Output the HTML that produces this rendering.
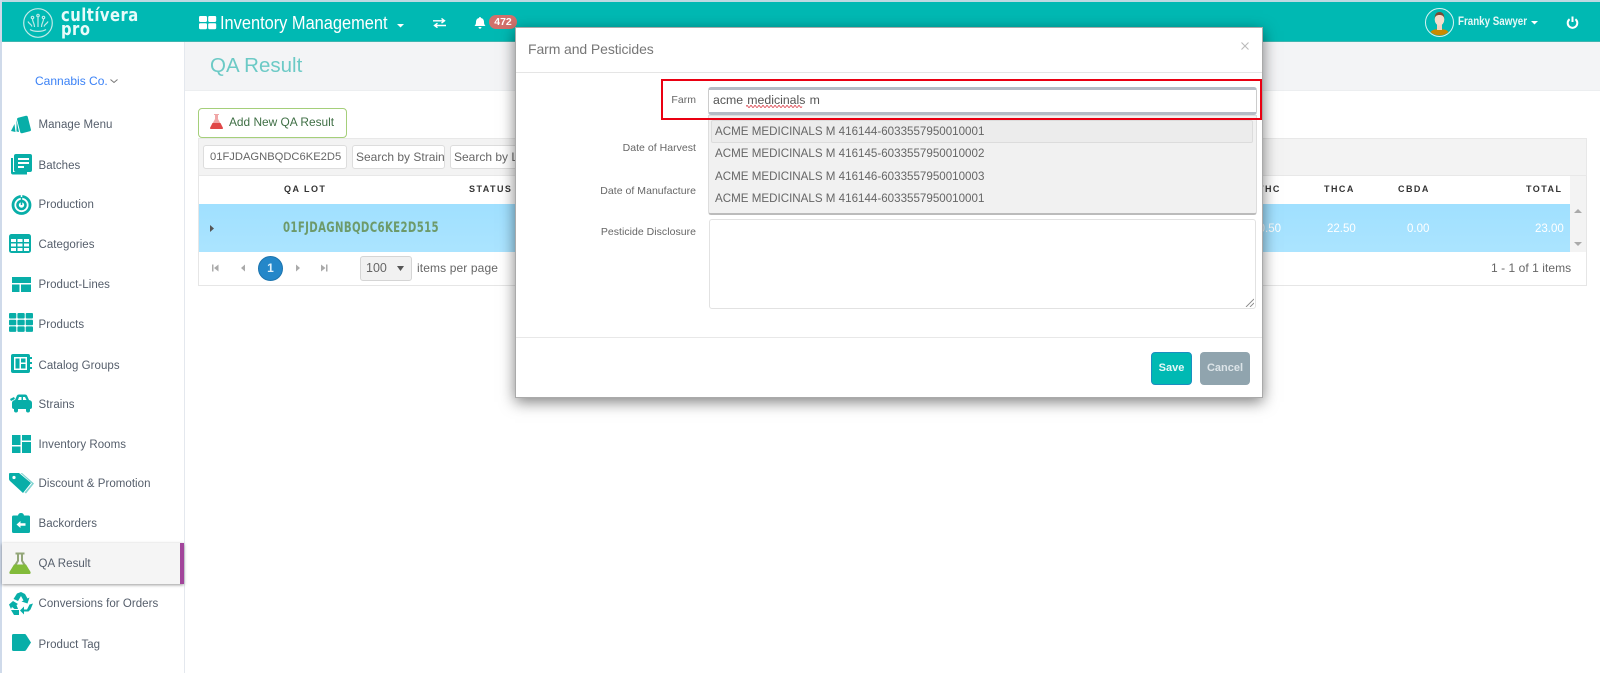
<!DOCTYPE html>
<html><head><meta charset="utf-8"><title>QA Result</title>
<style>
html,body{margin:0;padding:0;width:1600px;height:673px;overflow:hidden;background:#fff;font-family:"Liberation Sans",sans-serif}
div,span,svg{position:absolute;box-sizing:border-box}
.t{white-space:nowrap;height:20px;line-height:20px}
.m{left:38.500px;font-size:11.500px;letter-spacing:.04px;color:#555e6b;margin-top:1px}
.h{font-size:9px;font-weight:bold;letter-spacing:1.450px;color:#333;top:179px}
.v{font-size:11.500px;color:#fff;top:219px}
.l{font-size:10.500px;color:#666;text-align:right;right:904px;letter-spacing:.03px}
.o{left:715px;font-size:11.600px;color:#666;margin-top:1px}
.inp{background:#fff;border:1px solid #ddd;border-radius:3px;font-size:12px;color:#666;overflow:hidden;white-space:nowrap;padding-left:3px}
.logo{font-family:'DejaVu Sans',sans-serif;font-size:18px;font-weight:bold;color:#e8fbfa;letter-spacing:.6px;transform:scaleX(.82);transform-origin:left}
</style></head><body>
<div style="left:0;top:0;width:1600px;height:2px;background:#bcd9e2"></div>
<div style="left:0;top:0;width:2px;height:673px;background:#cfdaea"></div>
<div style="left:2px;top:2px;width:1598px;height:40px;background:#00b9b3;border-bottom:1px solid #3fb5b0"></div>

<svg style="left:22px;top:7px" width="32" height="32" viewBox="0 0 32 32" fill="none" stroke="#bfeae8" stroke-width="1.200"><circle cx="16" cy="16" r="14.300"/><path d="M8 22.500c4 2.500 12 2.500 16 0M16 20V10M12.500 20c0-4-2-5-2-8M19.500 20c0-4 2-5 2-8M10 19.500c-1-3-3-2.500-4-5M22 19.500c1-3 3-2.500 4-5"/><circle cx="16" cy="8.500" r="1.200"/><circle cx="10.500" cy="10.500" r="1.200"/><circle cx="21.500" cy="10.500" r="1.200"/></svg>
<div class="t logo" style="left:61px;top:6px">cultívera</div>
<div class="t logo" style="left:61px;top:20px">pro</div>

<svg style="left:199px;top:16px" width="18" height="14" fill="#fff"><rect width="8" height="6" rx="1.200"/><rect x="9.200" width="8" height="6" rx="1.200"/><rect y="7.200" width="8" height="6" rx="1.200"/><rect x="9.200" y="7.200" width="8" height="6" rx="1.200"/></svg>
<div class="t" style="left:220px;top:13px;font-size:18px;color:#fff;transform:scaleX(.91);transform-origin:left">Inventory Management</div>
<svg style="left:397px;top:24px" width="7" height="4" fill="#fff"><path d="M0 0h7L3.500 3.500z"/></svg>
<svg style="left:433px;top:18px" width="13" height="10" fill="none" stroke="#fff" stroke-width="1.400"><path d="M0 2.800h11M8.500 .5l3 2.300-3 2.200M13 7.500H2M4.500 5.200l-3 2.300 3 2.200"/></svg>
<svg style="left:474px;top:17px" width="12" height="12" fill="#fff"><path d="M6 0c.7 0 1 .4 1 1 2 .4 3 2 3 4 0 2 .6 3 1.500 4H.5C1.400 8 2 7 2 5c0-2 1-3.600 3-4 0-.6.3-1 1-1zM4.500 10h3c0 1-.7 1.700-1.500 1.700S4.500 11 4.500 10z"/></svg>
<div style="left:489px;top:15px;width:28px;height:14px;background:#d2706b;border-radius:7px;color:#fff;font-size:10.500px;font-weight:bold;text-align:center;line-height:14px">472</div>

<svg style="left:1425px;top:8px" width="29" height="29" viewBox="0 0 29 29"><defs><clipPath id="c"><circle cx="14.500" cy="14.500" r="13"/></clipPath></defs><circle cx="14.500" cy="14.500" r="14" fill="#00b9b3" stroke="#d6f3f2" stroke-width="1"/><g clip-path="url(#c)"><path d="M4 29c0-6 4-8 10.500-8s10.500 2 10.500 8z" fill="#c98a00"/><rect x="12" y="16" width="5" height="6" fill="#f2d4c0"/><ellipse cx="14.500" cy="11.500" rx="4.800" ry="6" fill="#f5dccb"/><path d="M9.700 10c0-4 2-6 4.800-6s4.800 2 4.800 6c-1-2-2-3-4.800-3s-3.800 1-4.800 3z" fill="#7b4a32"/></g></svg>
<div class="t" style="left:1458px;top:12px;font-size:11.500px;font-weight:bold;color:#e6f8f7;transform:scaleX(.85);transform-origin:left">Franky Sawyer</div>
<svg style="left:1531px;top:21px" width="7" height="4" fill="#fff"><path d="M0 0h7L3.500 3.500z"/></svg>
<svg style="left:1566px;top:16px" width="13" height="13" fill="none" stroke="#fff" stroke-width="2"><path d="M3.600 3.200a4.800 4.800 0 1 0 5.800 0M6.500 .5V6"/></svg>

<!-- sidebar -->
<div style="left:184px;top:42px;width:1px;height:631px;background:#e4e8ee"></div>
<div class="t" style="left:35px;top:71px;font-size:12px;color:#3b82f6">Cannabis Co.</div>
<svg style="left:110px;top:79px" width="8" height="5" fill="none" stroke="#777" stroke-width="1"><path d="M.5.500l3.500 3 3.500-3"/></svg>

<svg style="left:10px;top:115px" width="22" height="20" fill="#08aea8"><rect x="8.500" y="1.500" width="11" height="16" rx="1.500" transform="rotate(-14 14 9.500)"/><path d="M6.500 5l2.500 12-2.500-.5zM1 16l3.500-7 1 8z"/></svg>
<div class="t m" style="top:114px">Manage Menu</div>
<svg style="left:11px;top:154px" width="21" height="21" fill="#08aea8"><path d="M0 4h2v14h14v2.500H2q-2 0-2-2z"/><path d="M5 0h14q2 0 2 2v14q0 2-2 2H5q-2 0-2-2V2q0-2 2-2z"/><path d="M7 4h11v2H7zM7 8h11v2H7zM7 12h6v2H7z" fill="#fff"/></svg>
<div class="t m" style="top:155px">Batches</div>
<svg style="left:11px;top:195px" width="21" height="20" fill="none" stroke="#08aea8"><circle cx="10.500" cy="10" r="8.500" stroke-width="2.800"/><circle cx="10.500" cy="10" r="4" stroke-width="2.600"/><path d="M10.500 0v4" stroke="#fff" stroke-width="1.500"/><path d="M10.500 2v8" stroke-width="1.500"/></svg>
<div class="t m" style="top:194px">Production</div>
<svg style="left:9px;top:234px" width="22" height="19"><rect width="22" height="19" rx="2.500" fill="#08aea8"/><g fill="#fff"><rect x="2" y="5" width="5" height="3"/><rect x="8.500" y="5" width="5" height="3"/><rect x="15" y="5" width="5" height="3"/><rect x="2" y="9.500" width="5" height="3"/><rect x="8.500" y="9.500" width="5" height="3"/><rect x="15" y="9.500" width="5" height="3"/><rect x="2" y="14" width="5" height="3"/><rect x="8.500" y="14" width="5" height="3"/><rect x="15" y="14" width="5" height="3"/></g></svg>
<div class="t m" style="top:234px">Categories</div>
<svg style="left:12px;top:277px" width="19" height="15" fill="#08aea8"><rect width="19" height="6"/><rect y="7.500" width="7.500" height="7.500"/><rect x="9" y="7.500" width="10" height="7.500"/></svg>
<div class="t m" style="top:274px">Product-Lines</div>
<svg style="left:9px;top:313px" width="24" height="19" fill="#08aea8"><rect width="7.300" height="5.500" rx="1"/><rect x="8.400" width="7.300" height="5.500" rx="1"/><rect x="16.700" width="7.300" height="5.500" rx="1"/><rect y="6.700" width="7.300" height="5.500" rx="1"/><rect x="8.400" y="6.700" width="7.300" height="5.500" rx="1"/><rect x="16.700" y="6.700" width="7.300" height="5.500" rx="1"/><rect y="13.400" width="7.300" height="5.500" rx="1"/><rect x="8.400" y="13.400" width="7.300" height="5.500" rx="1"/><rect x="16.700" y="13.400" width="7.300" height="5.500" rx="1"/></svg>
<div class="t m" style="top:314px">Products</div>
<svg style="left:11px;top:354px" width="21" height="19"><rect width="19" height="19" rx="2" fill="#08aea8"/><rect x="19" y="3" width="2" height="2" fill="#08aea8"/><rect x="19" y="8" width="2" height="2" fill="#08aea8"/><rect x="19" y="13" width="2" height="2" fill="#08aea8"/><rect x="3" y="3" width="13" height="13" fill="#fff"/><g fill="#08aea8"><rect x="4.500" y="4.500" width="4" height="10"/><rect x="10" y="4.500" width="4.500" height="4"/><rect x="10" y="10" width="4.500" height="4.500"/></g></svg>
<div class="t m" style="top:355px">Catalog Groups</div>
<svg style="left:10px;top:394px" width="22" height="19" fill="#08aea8"><path d="M5 6l2-4.500q.5-1 2-1h6q1.500 0 2 1L19 6q3 .5 3 3v4q0 2-2 2v1.500q0 2-2 2t-2-2V15H8v1.500q0 2-2 2t-2-2V15q-2 0-2-2V9q0-2.500 3-3z"/><path d="M8 6l1-3h2.500v3zM13 3h2l1.500 3H13z" fill="#fff"/><path d="M0 5l4-2 1 2-4 2z"/></svg>
<div class="t m" style="top:394px">Strains</div>
<svg style="left:12px;top:435px" width="19" height="18" fill="#08aea8"><rect width="8.500" height="10"/><rect x="10" width="9" height="5.500"/><rect x="10" y="7" width="9" height="11"/><rect y="11.500" width="8.500" height="6.500"/></svg>
<div class="t m" style="top:434px">Inventory Rooms</div>
<svg style="left:9px;top:473px" width="26" height="21" fill="#08aea8"><path d="M1 0h9l12 10-8 10L1 8q-1-1-1-2V1q0-1 1-1z"/><path d="M13 0l12 10.500-8 10-1.500-1L23 10.500 11.500 0z" fill="#7fd4d1"/><circle cx="5" cy="4.500" r="1.600" fill="#fff"/></svg>
<div class="t m" style="top:473px">Discount &amp; Promotion</div>
<svg style="left:12px;top:513px" width="18" height="20"><path d="M1.500 2.500H6q.5-2.500 3-2.500t3 2.500h4.500q1.500 0 1.500 1.500v14.500q0 1.500-1.500 1.500h-15Q0 20 0 18.500V4q0-1.500 1.500-1.500z" fill="#08aea8"/><path d="M4.500 11.500l4-3.500v2.200h5v2.600h-5V15z" fill="#fff"/></svg>
<div class="t m" style="top:513px">Backorders</div>

<div style="left:2px;top:543px;width:182px;height:41px;background:#f5f5f5;box-shadow:0 1px 3px rgba(0,0,0,.4)"></div>
<div style="left:180px;top:543px;width:4px;height:41px;background:#a2459b"></div>
<svg style="left:9px;top:552px" width="22" height="22"><path d="M6.500 .5h9v2H14v6l7.500 11.500q.5 2-1.500 2H2q-2 0-1.500-2L8 8.500v-6H6.500z" fill="#93a678"/><path d="M10 2.500h2v6.500l2.300 4H7.700l2.300-4z" fill="#f5f5f5"/><path d="M5 12.500h12l4.500 7.500q.5 2-1.500 2H2q-2 0-1.500-2z" fill="#82bb3a"/></svg>
<div class="t m" style="top:553px">QA Result</div>

<svg style="left:9px;top:592px" width="24" height="23" fill="#08aea8"><path d="M8 1.500L12 0l4 2 2.500 4.500 2-1-2 6-6-2 2-1L12 4 9 9 4.500 7z"/><path d="M4 9l5 3-1.500 1L9 17H5.500L3 15l-1 2L0 12.500z"/><path d="M24 13l-2.500 6-2 2H15v3l-4-4 4-4v3h3l2.500-5z" transform="translate(0,-1.500)"/><path d="M2 18h8v5H5z"/></svg>
<div class="t m" style="top:593px">Conversions for Orders</div>
<svg style="left:12px;top:634px" width="19" height="17" fill="#08aea8"><path d="M1.500 0h11q1 0 1.500.7l5 7.800-5 7.800q-.5.700-1.500.700h-11Q0 17 0 15.500v-14Q0 0 1.500 0z"/></svg>
<div class="t m" style="top:634px">Product Tag</div>

<!-- content -->
<div style="left:185px;top:42px;width:1415px;height:49px;background:#f3f4f6;border-bottom:1px solid #eceef0"></div>
<div class="t" style="left:210px;top:56px;font-size:20.500px;color:#6ccac6">QA Result</div>

<div style="left:198px;top:108px;width:149px;height:30px;border:1px solid #a5cf7a;border-radius:4px;background:#fff"></div>
<svg style="left:210px;top:114px" width="13" height="15"><path d="M4 0h5v1H8v4l5 9q0 1-1 1H1q-1 0-1-1l5-9V1H4z" fill="#f0a7a7"/><path d="M2.500 9h8l2.500 5q0 1-1 1H1q-1 0-1-1z" fill="#e04848"/></svg>
<div class="t" style="left:229px;top:112px;font-size:11.900px;color:#3f6f45">Add New QA Result</div>

<div style="left:198px;top:138px;width:1389px;height:148px;border:1px solid #e6e6e6"></div>
<div style="left:198px;top:138px;width:1389px;height:38px;background:#f3f3f3;border:1px solid #e8e8e8"></div>
<div class="inp" style="left:203px;top:145px;width:144px;height:24px;line-height:22px;padding-left:6px;font-size:11.200px">01FJDAGNBQDC6KE2D5</div>
<div class="inp" style="left:352px;top:145px;width:93px;height:24px;line-height:22px;font-size:12px">Search by Strain</div>
<div class="inp" style="left:450px;top:145px;width:90px;height:24px;line-height:22px;font-size:12px">Search by Lab</div>
<div class="t h" style="left:284px">QA LOT</div>
<div class="t h" style="left:469px">STATUS</div>
<div class="t h" style="left:1258px">THC</div>
<div class="t h" style="left:1324px">THCA</div>
<div class="t h" style="left:1398px">CBDA</div>
<div class="t h" style="left:1526px">TOTAL</div>

<div style="left:199px;top:204px;width:1371px;height:48px;background:linear-gradient(#a0e0ff,#abe4ff)"></div>
<div style="left:1570px;top:176px;width:16px;height:76px;background:#f3f3f3"></div>
<svg style="left:1574px;top:209px" width="8" height="38" fill="#aaa"><path d="M0 4l4-4 4 4zM0 33h8l-4 4z"/></svg>
<svg style="left:210px;top:225px" width="4" height="7" fill="#555"><path d="M0 0l4 3.500L0 7z"/></svg>
<div class="t" style="left:283px;top:218px;font-family:'DejaVu Sans',sans-serif;font-size:14px;font-weight:bold;color:#6d9a6a;letter-spacing:.5px;transform:scaleX(.725);transform-origin:left">01FJDAGNBQDC6KE2D515</div>
<div class="t v" style="left:1263px;width:18px;overflow:hidden;direction:rtl">0.50</div>
<div class="t v" style="left:1327px">22.50</div>
<div class="t v" style="left:1407px">0.00</div>
<div class="t v" style="left:1535px">23.00</div>

<svg style="left:212px;top:264px" width="122" height="8" fill="#aaa"><path d="M0 .5h1.500v7H0zM2 4l4.500-3.500v7zM29 4l4-3.500v7zM84 .5l4 3.500-4 3.500zM109 .5l4.500 3.500-4.500 3.500zM114 .5h1.500v7H114z"/></svg>
<div style="left:258px;top:256px;width:25px;height:25px;border-radius:50%;background:#2487c9;border:1px solid #1d74ae;color:#dff1fb;font-size:12px;font-weight:bold;text-align:center;line-height:23px">1</div>
<div style="left:360px;top:256px;width:52px;height:25px;background:#f1f1f1;border:1px solid #d5d5d5;border-radius:3px;font-size:12.500px;color:#666;line-height:23px;padding-left:5px">100</div>
<svg style="left:397px;top:266px" width="7" height="5" fill="#555"><path d="M0 0h7L3.500 5z"/></svg>
<div class="t" style="left:417px;top:258px;font-size:12px;color:#666;letter-spacing:.12px">items per page</div>
<div class="t" style="left:1491px;top:258px;font-size:12px;color:#666;letter-spacing:.05px">1 - 1 of 1 items</div>

<!-- modal -->
<div style="left:515px;top:27px;width:748px;height:371px;background:#fff;border:1px solid #aaa;box-shadow:0 4px 14px rgba(0,0,0,.5)"></div>
<div class="t" style="left:528px;top:39px;font-size:14px;color:#777;letter-spacing:-.1px">Farm and Pesticides</div>
<svg style="left:1241px;top:42px" width="8" height="8" stroke="#bbb" stroke-width="1.100"><path d="M.5.500l7 7M7.500.500l-7 7"/></svg>
<div style="left:516px;top:72px;width:746px;height:1px;background:#e5e5e5"></div>

<div style="left:708px;top:87px;width:549px;height:28px;background:#fff;border:1px solid #ccc;border-top:3px solid #b5bbc5;border-bottom:3px solid #b5bbc5;border-radius:3px"></div>
<div class="t" style="left:713px;top:90px;font-size:12.300px;color:#555;word-spacing:.8px">acme medicinals m</div>
<svg style="left:746px;top:105px" width="58" height="3" fill="none" stroke="#e0555f" stroke-width=".9"><path d="M0 1.500q1-2 2 0t2 0 2 0 2 0 2 0 2 0 2 0 2 0 2 0 2 0 2 0 2 0 2 0 2 0 2 0 2 0 2 0 2 0 2 0 2 0 2 0 2 0 2 0 2 0 2 0 2 0 2 0 2 0"/></svg>
<div style="left:708px;top:115px;width:549px;height:100px;background:#f1f1f1;border:1px solid #ddd;border-bottom:2px solid #bbb;border-radius:0 0 3px 3px"></div>
<div style="left:711px;top:120px;width:542px;height:23px;background:#ececec;border:1px solid #dcdcdc;border-radius:2px"></div>
<div class="t o" style="top:121px">ACME MEDICINALS M 416144-6033557950010001</div>
<div class="t o" style="top:143px">ACME MEDICINALS M 416145-6033557950010002</div>
<div class="t o" style="top:166px">ACME MEDICINALS M 416146-6033557950010003</div>
<div class="t o" style="top:188px">ACME MEDICINALS M 416144-6033557950010001</div>

<div class="t l" style="top:90px">Farm</div>
<div class="t l" style="top:138px">Date of Harvest</div>
<div class="t l" style="top:181px">Date of Manufacture</div>
<div class="t l" style="top:222px">Pesticide Disclosure</div>

<div style="left:661px;top:79px;width:601px;height:41px;border:2px solid #ea0012"></div>

<div style="left:709px;top:219px;width:547px;height:90px;background:#fff;border:1px solid #e2e2e2;border-radius:3px"></div>
<svg style="left:1245px;top:298px" width="9" height="9" stroke="#888" stroke-width=".9"><path d="M1 9l8-8M5 9l4-4"/></svg>
<div style="left:516px;top:337px;width:746px;height:1px;background:#e8e8e8"></div>
<div style="left:1151px;top:352px;width:41px;height:33px;background:#00b9b3;border:1px solid #1b8ec0;border-radius:4px;color:#e6f8f7;font-size:11px;font-weight:bold;text-align:center;line-height:31px">Save</div>
<div style="left:1200px;top:352px;width:50px;height:33px;background:#90a4ae;border-radius:4px;color:#dce4e8;font-size:11px;font-weight:bold;text-align:center;line-height:33px">Cancel</div>
</body></html>
